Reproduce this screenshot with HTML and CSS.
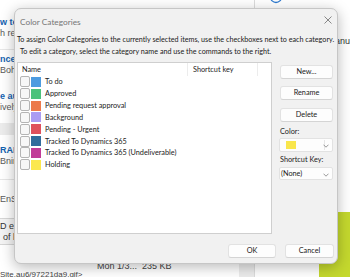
FILE: index.html
```html
<!DOCTYPE html>
<html>
<head>
<meta charset="utf-8">
<link rel="stylesheet" href="styles.css">
</head>
<body>
<div class="app">
  <div class="maillist">
    <div class="mail m1">
      <div class="subj">w te</div>
      <div class="prev">h re</div>
    </div>
    <div class="mail m2">
      <div class="subj">nces</div>
      <div class="prev">Bohs</div>
    </div>
    <div class="mail m3">
      <div class="subj">e au</div>
      <div class="prev">ively</div>
    </div>
    <div class="band"></div>
    <div class="mail m4">
      <div class="subj">RAI</div>
      <div class="prev">Bnim</div>
    </div>
    <div class="mail m5">
      <div class="prev">EnSi</div>
    </div>
    <div class="mail m6">
      <div class="prev dark">D ex</div>
      <div class="prev dark indent">of l</div>
    </div>
    <div class="attach">Mon 1/3...&nbsp; 235 KB</div>
    <div class="link">Site.au6/97221da9.gif&gt;</div>
  </div>
  <div class="scrollcol"><div class="scrollthumb"></div></div>
  <div class="pane">
    <svg class="avatar" width="16" height="6" viewBox="0 0 16 6"><circle cx="8" cy="-3" r="5.5" fill="none" stroke="#2f7bd0" stroke-width="1.3"/></svg>
    <div class="panetext">anu</div>
    <div class="lime"></div>
  </div>
</div>

<div class="dialog">
  <div class="titlebar">
    <span class="title">Color Categories</span>
    <svg class="close" width="8" height="8" viewBox="0 0 8 8"><path d="M0.5 0.5 L7.5 7.5 M7.5 0.5 L0.5 7.5" stroke="#7a7a7a" stroke-width="0.9" fill="none"/></svg>
  </div>
  <div class="desc">
    <div class="l1">To assign Color Categories to the currently selected items, use the checkboxes next to each category.</div>
    <div class="l2">To edit a category, select the category name and use the commands to the right.</div>
  </div>
  <div class="content">
    <div class="list">
      <div class="lhead">
        <div class="hname">Name</div>
        <div class="hkey">Shortcut key</div>
      </div>
      <div class="row"><span class="cb"></span><span class="sw" style="background:#4d9be0"></span><span class="nm">To do</span></div>
      <div class="row"><span class="cb"></span><span class="sw" style="background:#4cc27c"></span><span class="nm">Approved</span></div>
      <div class="row"><span class="cb"></span><span class="sw" style="background:#ec7a4c"></span><span class="nm">Pending request approval</span></div>
      <div class="row"><span class="cb"></span><span class="sw" style="background:#aa9cf2"></span><span class="nm">Background</span></div>
      <div class="row"><span class="cb"></span><span class="sw" style="background:#df515d"></span><span class="nm">Pending - Urgent</span></div>
      <div class="row"><span class="cb"></span><span class="sw" style="background:#316c9c"></span><span class="nm">Tracked To Dynamics 365</span></div>
      <div class="row"><span class="cb"></span><span class="sw" style="background:#c13b98"></span><span class="nm">Tracked To Dynamics 365 (Undeliverable)</span></div>
      <div class="row"><span class="cb"></span><span class="sw" style="background:#fbe84e"></span><span class="nm">Holding</span></div>
    </div>
    <div class="side">
      <div class="btn b-new">New...</div>
      <div class="btn b-ren">Rename</div>
      <div class="btn b-del">Delete</div>
      <div class="lbl lbl-color">Color:</div>
      <div class="dd dd-color">
        <span class="ddsw"></span>
        <span class="ddsep"></span>
        <svg class="chev" width="6" height="4" viewBox="0 0 6 4"><path d="M0.5 0.7 L3 3.2 L5.5 0.7" stroke="#808080" stroke-width="0.8" fill="none"/></svg>
      </div>
      <div class="lbl lbl-key">Shortcut Key:</div>
      <div class="dd dd-key">
        <span class="ddtext">(None)</span>
        <svg class="chev" width="6" height="4" viewBox="0 0 6 4"><path d="M0.5 0.7 L3 3.2 L5.5 0.7" stroke="#808080" stroke-width="0.8" fill="none"/></svg>
      </div>
    </div>
  </div>
  <div class="footer">
    <div class="btn b-ok">OK</div>
    <div class="btn b-cancel">Cancel</div>
  </div>
</div>
</body>
</html>
```
FILE: styles.css
```css
* { box-sizing: border-box; }
html, body { margin: 0; padding: 0; }
body {
  width: 350px;
  height: 277px;
  overflow: hidden;
  position: relative;
  background: #ffffff;
  font-family: "Lato", "Liberation Sans", sans-serif;
}

/* background app */
.app { display: flex; height: 277px; }
.maillist {
  width: 242px;
  font-family: "Liberation Sans", sans-serif;
  font-size: 9px;
  white-space: nowrap;
  overflow: hidden;
}
.mail .subj, .mail .prev { height: 11px; line-height: 11px; }
.subj { color: #1462b0; font-weight: bold; }
.prev { color: #5a5a5a; }
.prev.dark { color: #333; }
.indent { padding-left: 3px; }
.m1 { padding-top: 17px; border-bottom: 1px solid #e8e8e8; padding-bottom: 10px; }
.m2 { padding-top: 4px; padding-bottom: 15px; }
.m3 { padding-bottom: 10px; }
.band { height: 12px; background: #ececec; }
.m4 { padding-top: 10px; padding-bottom: 12px; border-bottom: 1px solid #e6e6e6; }
.m5 { padding-top: 14px; padding-bottom: 13px; }
.m6 { border-top: 1px solid #d6d6d6; border-bottom: 1px solid #d6d6d6; background: #f4f4f4; padding: 2px 0 1px; }
.attach { padding-left: 97px; margin-top: 17px; height: 9px; line-height: 9px; color: #444; font-size: 9px; }
.link { height: 8px; line-height: 8px; color: #444; font-size: 8px; }
.scrollcol { width: 15px; display: flex; flex-direction: column; justify-content: flex-end; }
.scrollthumb { height: 20px; background: #ececec; }
.pane { flex: 1; border-left: 1px solid #dcdcdc; display: flex; flex-direction: column; }
.avatar { display: block; margin-left: 13px; }
.panetext {
  margin-top: 29px;
  padding-left: 80px;
  font-size: 9px;
  color: #333;
  height: 12px;
  line-height: 12px;
  font-family: "Liberation Sans", sans-serif;
}
.lime { margin-top: auto; margin-left: 64px; height: 65px; background: #c4d82e; }

/* dialog */
.dialog {
  position: absolute;
  left: 14px;
  top: 8px;
  width: 324px;
  height: 256px;
  background: #f1f1f1;
  border: 1px solid #c6c6c6;
  border-radius: 7px;
  box-shadow: 0 3px 14px rgba(0,0,0,0.28);
  display: flex;
  flex-direction: column;
  font-size: 7.3px;
  color: #1b1b1b;
}
.titlebar {
  height: 25px;
  display: flex;
  align-items: center;
  justify-content: space-between;
  padding: 0 5px 0 5px;
}
.title { font-size: 8.3px; color: #767676; }
.close { display: block; margin-top: -3px; }
.desc { padding-left: 2px; white-space: nowrap; font-size: 7.2px; }
.desc .l1, .desc .l2 { height: 12px; line-height: 12px; }
.desc .l2 { padding-left: 3px; }
.content { display: flex; margin-top: 4px; gap: 7px; padding-left: 2px; }
.list {
  width: 255px;
  height: 172px;
  background: #ffffff;
  border: 1px solid #cfcfcf;
}
.lhead { display: flex; height: 13px; line-height: 13px; }
.hname { width: 170px; padding-left: 4px; border-right: 1px solid #ececec; }
.hkey { width: 70px; padding-left: 5px; border-right: 1px solid #ececec; }
.row { display: flex; align-items: center; height: 11.85px; white-space: nowrap; }
.cb {
  width: 10px;
  height: 11px;
  margin-left: 2px;
  border: 1px solid #b4b4b4;
  border-radius: 2px;
  background: #f7f7f7;
}
.sw { width: 10px; height: 10px; margin-left: 1px; }
.nm { margin-left: 4px; }
.side { width: 54px; display: flex; flex-direction: column; }
.btn {
  height: 14px;
  line-height: 12px;
  text-align: center;
  background: #fdfdfd;
  border: 1px solid #e2e2e2;
  border-bottom-color: #d4d4d4;
  border-radius: 3px;
  color: #222;
}
.b-new { margin-top: 3px; margin-left: 1px; }
.b-ren { margin-top: 7px; margin-left: 1px; }
.b-del { margin-top: 8px; margin-left: 1px; }
.lbl { height: 12px; line-height: 12px; padding-left: 1px; }
.lbl-color { margin-top: 4px; }
.lbl-key { margin-top: 2px; }
.dd {
  height: 14px;
  background: #fdfdfd;
  border: 1px solid #e2e2e2;
  border-radius: 2px;
  display: flex;
  align-items: center;
  position: relative;
}
.dd-key { height: 13px; margin-top: 1px; }
.ddsw { width: 10px; height: 8px; margin-left: 6px; background: #f9e64c; }
.ddsep { position: absolute; left: 44px; top: 1px; bottom: 1px; width: 1px; background: #e6e6e6; }
.chev { position: absolute; right: 3px; top: 5px; }
.ddtext { margin-left: 1px; }
.footer { display: flex; justify-content: flex-end; gap: 9px; margin-top: 10px; padding-right: 3px; }
.b-ok { width: 48px; }
.b-cancel { width: 49px; }
```
